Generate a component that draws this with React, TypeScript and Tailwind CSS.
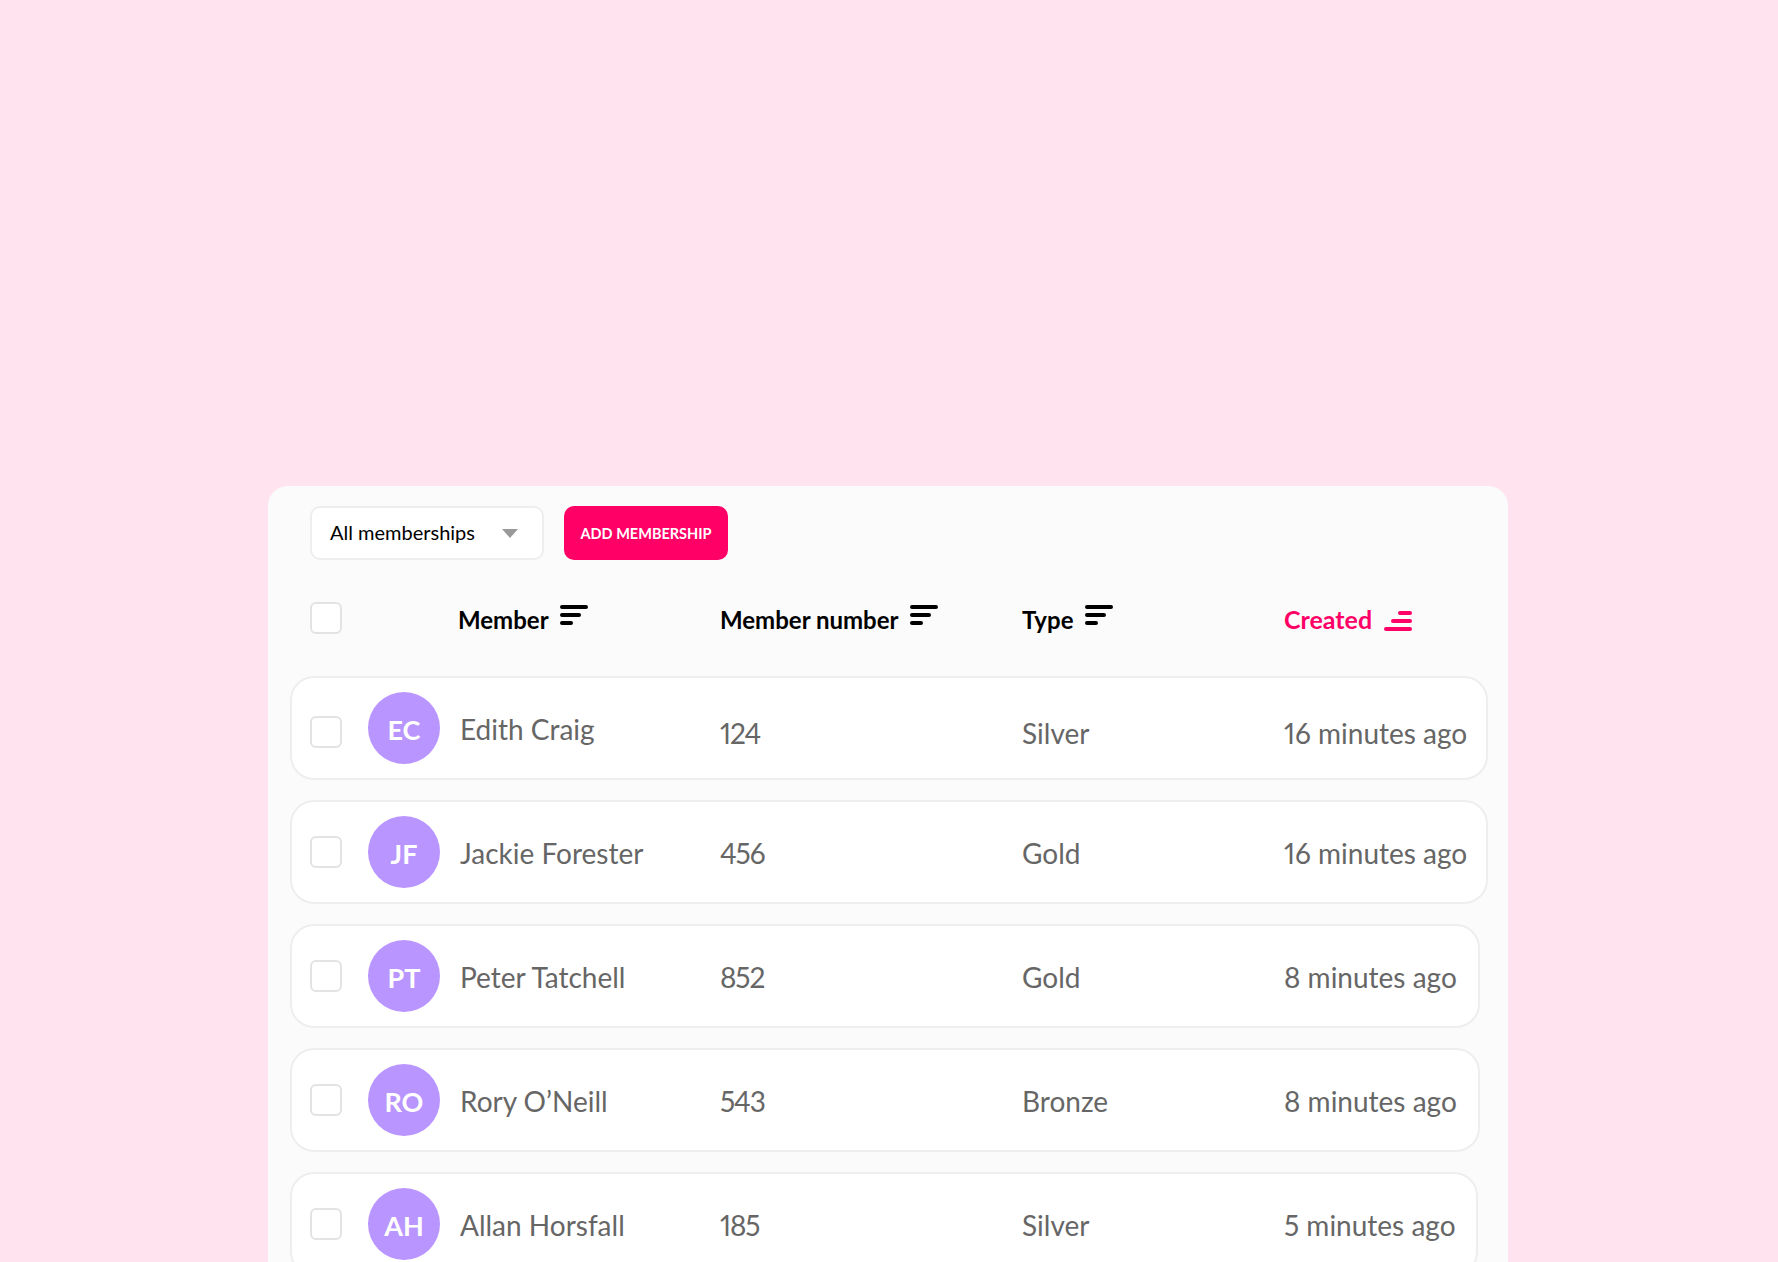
const members = [
  { initials: "EC", name: "Edith Craig", number: "124", type: "Silver", created: "16 minutes ago", width: "w-[1198px]", first: true },
  { initials: "JF", name: "Jackie Forester", number: "456", type: "Gold", created: "16 minutes ago", width: "w-[1198px]", first: false },
  { initials: "PT", name: "Peter Tatchell", number: "852", type: "Gold", created: "8 minutes ago", width: "w-[1190px]", first: false },
  { initials: "RO", name: "Rory O’Neill", number: "543", type: "Bronze", created: "8 minutes ago", width: "w-[1190px]", first: false },
  { initials: "AH", name: "Allan Horsfall", number: "185", type: "Silver", created: "5 minutes ago", width: "w-[1188px]", first: false },
];

function SortIcon({ active = false }: { active?: boolean }) {
  if (active) {
    return (
      <svg width="28" height="20" viewBox="0 0 28 20" className="mt-[2px] fill-[#ff0066]" aria-hidden="true">
        <rect x="14" y="0" width="14" height="4" rx="2" />
        <rect x="7" y="8" width="21" height="4" rx="2" />
        <rect x="0" y="16" width="28" height="4" rx="2" />
      </svg>
    );
  }
  return (
    <svg width="28" height="20" viewBox="0 0 28 20" className="mt-[3px] fill-black" aria-hidden="true">
      <rect x="0" y="0" width="28" height="4" rx="2" />
      <rect x="0" y="8" width="21" height="4" rx="2" />
      <rect x="0" y="16" width="13" height="4" rx="2" />
    </svg>
  );
}

function Checkbox({ className = "" }: { className?: string }) {
  return <div className={`h-8 w-8 shrink-0 rounded-[6px] border-2 border-[#e3e3e3] bg-white ${className}`} />;
}

export default function App() {
  return (
    <div className="h-[1262px] overflow-hidden bg-[#ffe4ef] pl-[268px] pt-[486px] font-['Lato',sans-serif] proportional-nums">
      <div className="h-[776px] w-[1240px] rounded-t-[20px] bg-[#fbfbfb] pt-5">
        <div className="flex items-center gap-5 pl-[42px]">
          <div className="flex h-[54px] w-[234px] items-center justify-between rounded-[10px] border-2 border-[#eeeeee] bg-white pl-[18px] pr-[24px] text-[20px] text-black">
            <span className="pb-[2px]">All memberships</span>
            <div className="h-0 w-0 border-x-[8px] border-t-[9px] border-x-transparent border-t-[#999999]" />
          </div>
          <button className="h-[54px] w-[164px] rounded-[10px] bg-[#ff0066] pt-[2px] text-[14.5px] font-bold text-white">
            ADD MEMBERSHIP
          </button>
        </div>

        <div className="mt-[42px] flex h-8 items-center pl-[42px] text-[24px] font-bold text-black">
          <Checkbox />
          <div className="ml-[116px] flex w-[262px] items-start gap-[11px] pt-1">
            Member
            <SortIcon />
          </div>
          <div className="flex w-[302px] items-start gap-[11px] pt-1">
            Member number
            <SortIcon />
          </div>
          <div className="flex w-[262px] items-start gap-3 pt-1">
            Type
            <SortIcon />
          </div>
          <div className="flex items-center gap-3 pt-1 text-[25px] text-[#ff0066]">
            Created
            <SortIcon active />
          </div>
        </div>

        <div className="mt-[42px] flex flex-col gap-5 pl-[22px]">
          {members.map((m) => (
            <div
              key={m.initials}
              className={`flex h-[104px] shrink-0 items-center rounded-[24px] border-2 border-[#eeeeee] bg-white pl-[18px] text-[28px] text-[#666666] ${m.width}`}
            >
              <Checkbox className={m.first ? "mt-2" : ""} />
              <div className="ml-[26px] flex h-[72px] w-[72px] shrink-0 items-center justify-center rounded-full bg-[#b995ff] pt-1 text-[27px] font-bold text-white">
                {m.initials}
              </div>
              <div className="ml-[20px] w-[260px] shrink-0 pt-[2px]">{m.name}</div>
              <div className={`w-[302px] shrink-0 tracking-[-0.04em] ${m.first ? "pt-[9px]" : "pt-[2px]"}`}>{m.number}</div>
              <div className={`w-[262px] shrink-0 ${m.first ? "pt-[9px]" : "pt-[2px]"}`}>{m.type}</div>
              <div className={`shrink-0 ${m.first ? "pt-[9px]" : "pt-[2px]"}`}>{m.created}</div>
            </div>
          ))}
        </div>
      </div>
    </div>
  );
}
